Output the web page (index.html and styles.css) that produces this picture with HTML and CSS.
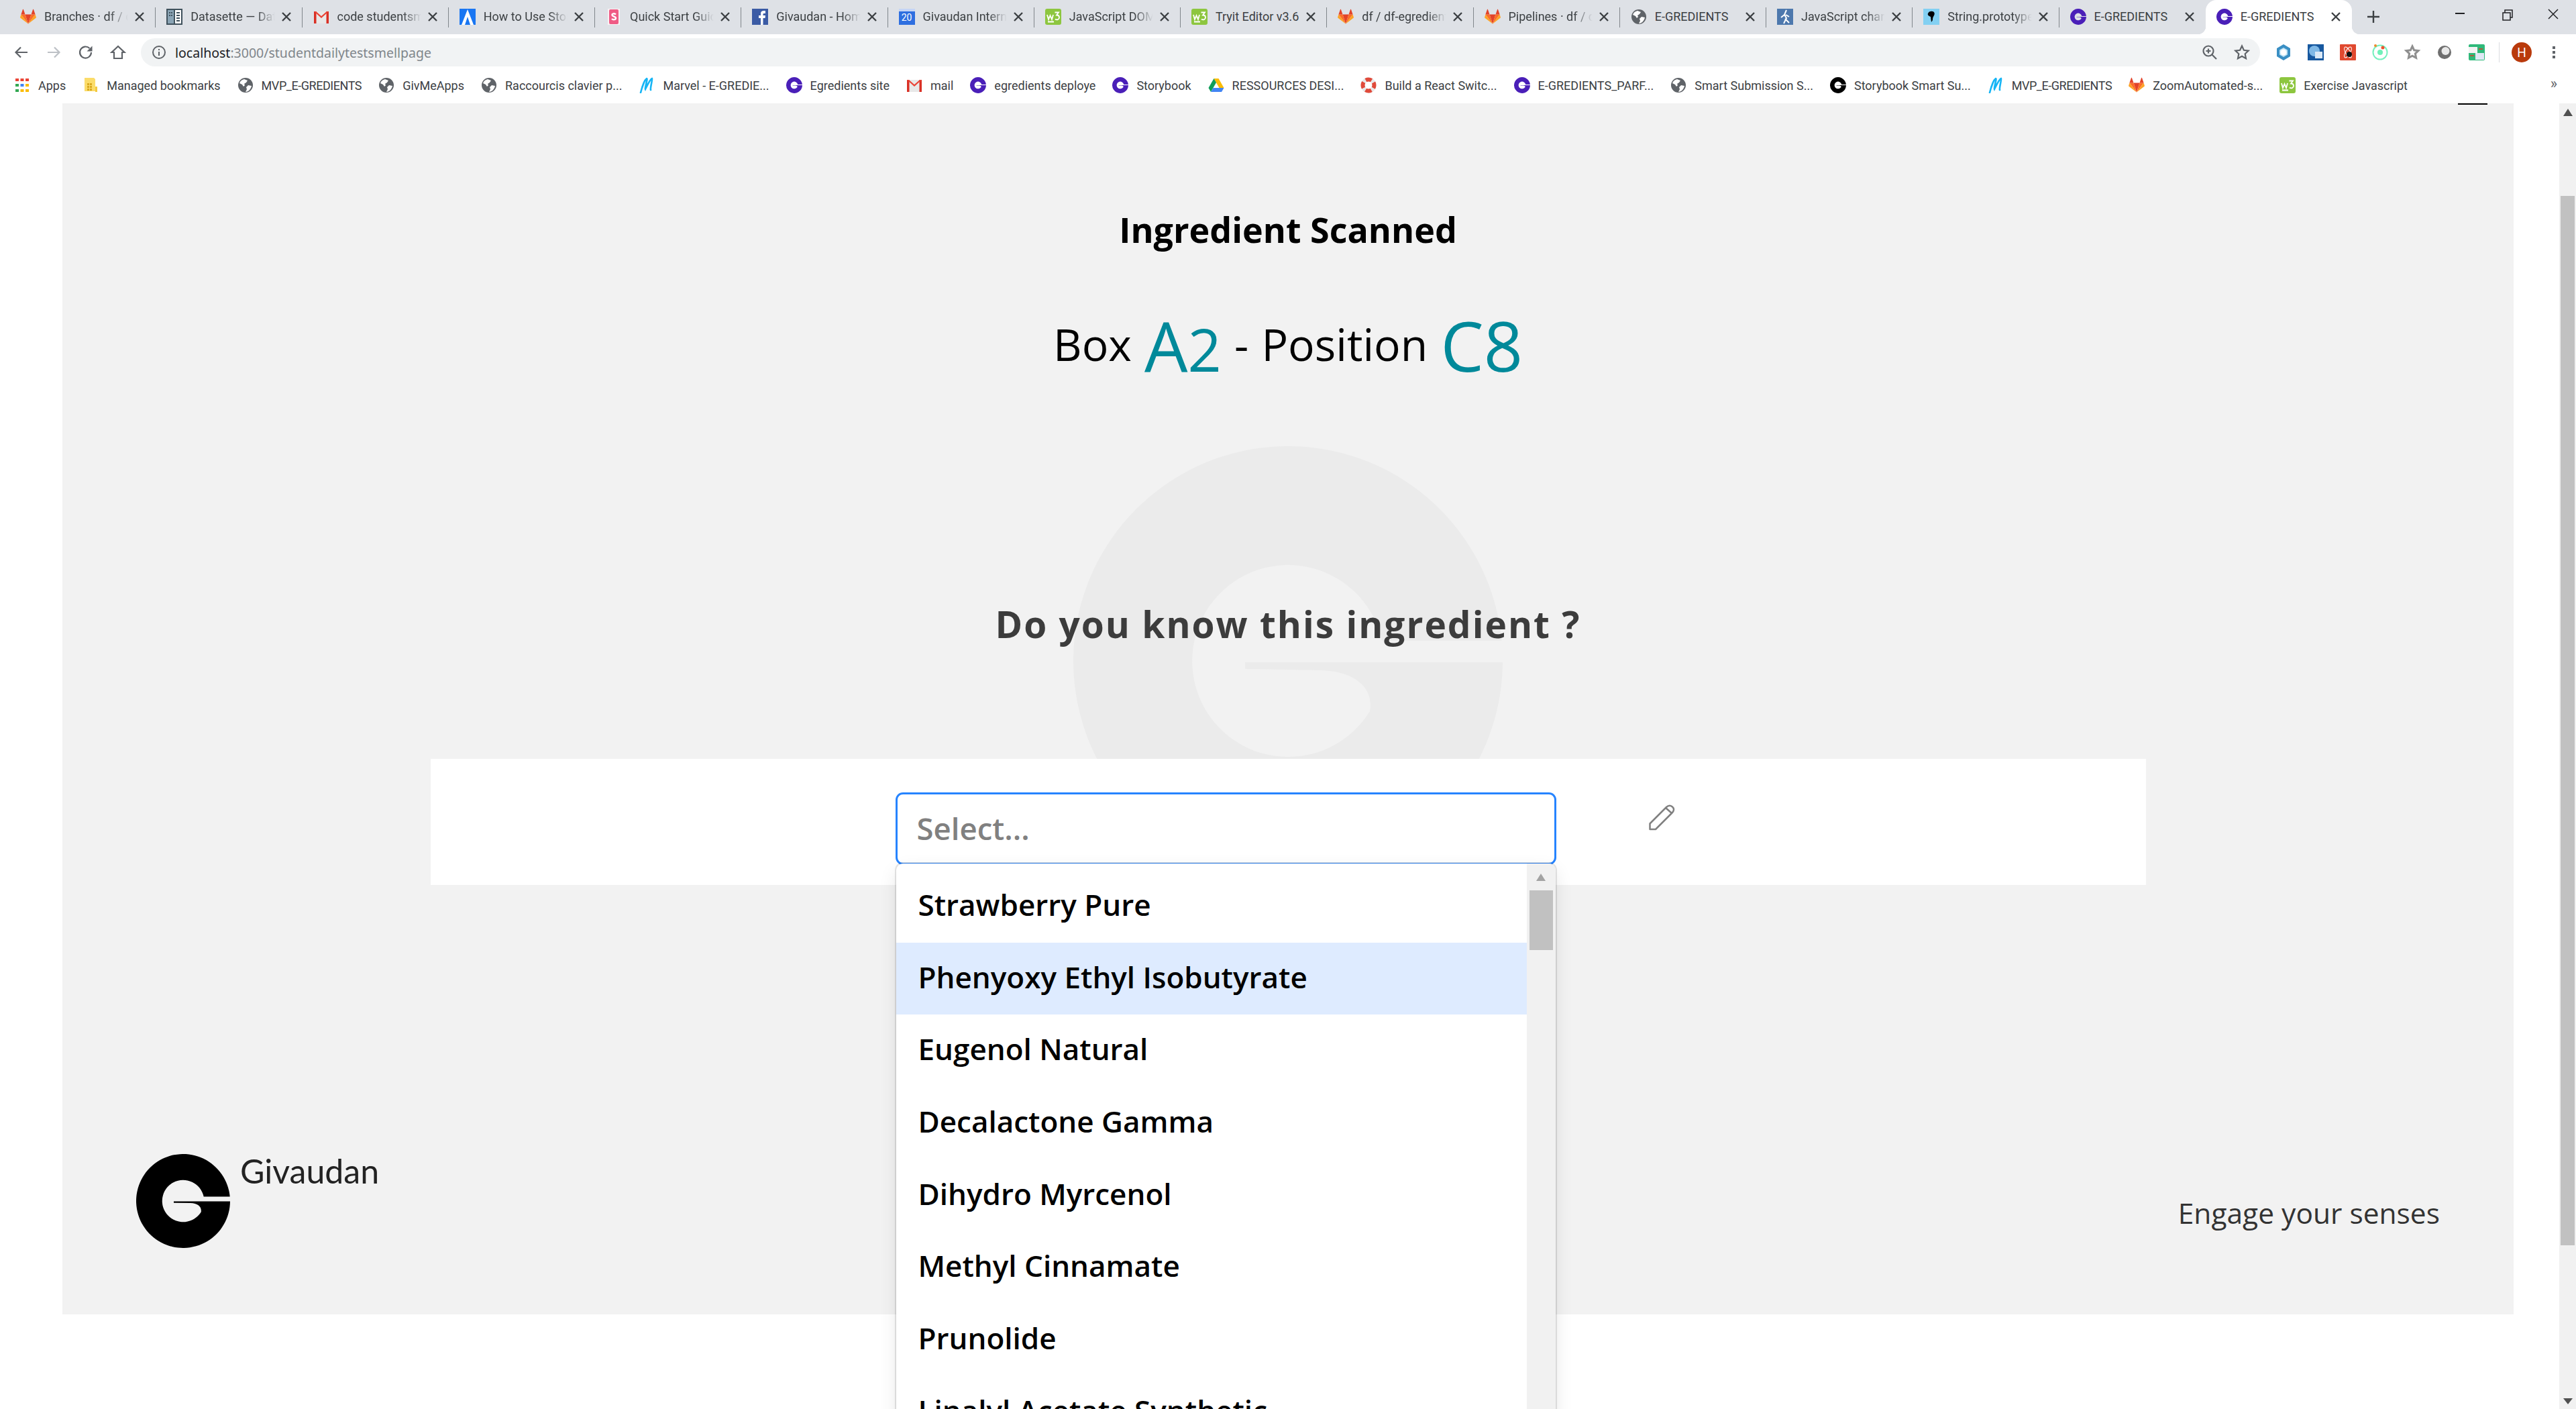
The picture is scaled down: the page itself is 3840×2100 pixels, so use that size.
FILE: index.html
```html
<!DOCTYPE html>
<html lang="en">
<head>
<meta charset="utf-8">
<title>E-GREDIENTS</title>
<link rel="stylesheet" href="styles.css">
</head>
<body>
<svg class="defs" width="0" height="0" aria-hidden="true">
  <defs>
    <symbol id="g-mark" viewBox="0 0 640 640"><path d="M638.6 290A320 320 0 1 0 640 322L256 322 256 332 370 334C420 336 448 360 442 395A143 143 0 1 1 460 290Z"/></symbol>
    <symbol id="ic-gitlab" viewBox="0 0 24 24">
      <path fill="#e24329" d="M12 22.5 16.5 8.6h-9z"/><path fill="#fc6d26" d="M12 22.5 7.5 8.6H1.4zM12 22.5l4.5-13.9h6.1z"/>
      <path fill="#fca326" d="M1.4 8.6.1 12.7c-.1.4 0 .8.4 1L12 22.5zM22.6 8.6l1.3 4.1c.1.4 0 .8-.4 1L12 22.5z"/>
      <path fill="#e24329" d="M1.4 8.6h6.1L4.9 1c-.2-.4-.7-.4-.9 0zM22.6 8.6h-6.1L19.100 1c.2-.4.7-.4.9 0z"/>
    </symbol>
    <symbol id="ic-data" viewBox="0 0 24 24"><rect width="24" height="24" fill="#3f515c"/><rect x="2" y="2" width="9" height="20" fill="#8aa4b5"/><rect x="13" y="2" width="9" height="20" fill="#fff"/><path fill="#3f515c" d="M4 5h2v2H4zM7 5h2v2H7zM4 9h2v2H4zM7 9h2v2H7zM15 5h5v2h-5zM15 9h5v2h-5zM15 13h5v2h-5zM15 17h5v2h-5z"/></symbol>
    <symbol id="ic-gmail" viewBox="0 0 24 24"><path fill="#e8e8e8" d="M1 4h22v18H1z"/><path fill="#d93025" d="M1 4h3.500v18H1zM19.500 4H23v18h-3.500z"/><path fill="#ea4335" d="M1 4h3l8 7 8-7h3l-11 10z"/></symbol>
    <symbol id="ic-ant" viewBox="0 0 24 24"><rect width="24" height="24" fill="#1976f2"/><path fill="#fff" d="M12 1 21 24h-5L12 12 8 24H3z"/></symbol>
    <symbol id="ic-sketch" viewBox="0 0 24 24"><rect x="3" width="18" height="24" fill="#f8f2f4"/><rect x="5" y="1" width="14" height="22" rx="2" fill="#ef5b85"/><path fill="none" stroke="#fff" stroke-width="2.400" d="M15 8.500c-2-2-6-1.500-5.500 1s5.500 2 5.500 4.500-4 3-6 1"/></symbol>
    <symbol id="ic-fb" viewBox="0 0 24 24"><rect width="24" height="24" fill="#3b5ba5"/><path fill="#fff" d="M13 24V14h-3v-4h3V7c0-3 2-4 4.500-4H20v4h-2c-1 0-1.500.5-1.500 1.500V10H20l-.5 4h-3v10z"/></symbol>
    <symbol id="ic-globe" viewBox="0 0 24 24"><circle cx="12" cy="12" r="11" fill="#5f6368"/><path fill="#fff" d="M10 3c-4 1-6 3-7 6l4 2 2 3 2-2-1-2 3-2 2-3zM21 13l-5-1-3 3 1 3-2 4c4 0 8-4 9-9z"/></symbol>
    <symbol id="ic-w3" viewBox="0 0 24 24"><rect width="24" height="24" rx="3" fill="#8dc63f"/><path fill="none" stroke="#fff" stroke-width="1.800" d="M3 9l2 7 2.500-6 2.500 6 2-7M14.500 5.500H20l-3 4c3 0 4 1.500 4 3.500 0 3-3.500 4.500-6 2.500M4 19.500h9"/></symbol>
    <symbol id="ic-drive" viewBox="0 0 24 24"><path fill="#fbbc04" d="M8.500 2h7l8 14h-7z"/><path fill="#0f9d58" d="M8.500 2 .5 16l3.500 6 8-14z"/><path fill="#4285f4" d="M4 22h16l3.500-6H7.500z"/></symbol>
    <symbol id="ic-buoy" viewBox="0 0 24 24"><circle cx="12" cy="12" r="8.500" fill="none" stroke="#e8e8e8" stroke-width="6"/><circle cx="12" cy="12" r="8.500" fill="none" stroke="#e04a3a" stroke-width="6" stroke-dasharray="9 4.350" stroke-dashoffset="4.500"/></symbol>
    <symbol id="ic-marvel" viewBox="0 0 24 24"><path fill="none" stroke="#16b5f5" stroke-width="2.600" stroke-linecap="round" d="M3 23C5 15 9 4 12 2c2 0-3 14-2 16 2-4 7-15 10-16 1 1-3 14-2 17"/></symbol>
    <symbol id="ic-bldg" viewBox="0 0 24 24"><path fill="#fbdc6a" d="M3 1h14l2 2v18H3z"/><rect x="19" y="14" width="3" height="8" fill="#f3c93f"/><path fill="#d9a91f" d="M7 9h3v3H7zM11 9h3v3h-3zM7 13h3v3H7zM11 13h3v3h-3zM7 17h3v3H7zM11 17h3v3h-3z"/></symbol>
    <symbol id="ic-apps" viewBox="0 0 24 24"><path fill="#ea4335" d="M2 2h5v4H2zM9.500 2h5v4h-5zM17 2h5v4h-5z"/><path fill="#34a853" d="M2 10h5v4H2z"/><path fill="#4285f4" d="M9.500 10h5v4h-5z"/><path fill="#fbbc04" d="M17 10h5v4h-5z"/><path fill="#34a853" d="M2 18h5v4H2z"/><path fill="#fbbc04" d="M9.500 18h5v4h-5zM17 18h5v4h-5z"/></symbol>
    <symbol id="ic-x" viewBox="0 0 24 24"><path fill="none" stroke="#3c4043" stroke-width="2.400" d="M6 6l12 12M18 6 6 18"/></symbol>
  </defs>
</svg>

<div class="window">
  <header class="tabbar">
    <div class="tab"><svg class="fav"><use href="#ic-gitlab"/></svg><span class="tab-title">Branches · df / df-egredients</span><svg class="tab-close"><use href="#ic-x"/></svg></div>
    <div class="tab"><svg class="fav"><use href="#ic-data"/></svg><span class="tab-title">Datasette — Datasette</span><svg class="tab-close"><use href="#ic-x"/></svg></div>
    <div class="tab"><svg class="fav"><use href="#ic-gmail"/></svg><span class="tab-title">code studentsmell</span><svg class="tab-close"><use href="#ic-x"/></svg></div>
    <div class="tab"><svg class="fav"><use href="#ic-ant"/></svg><span class="tab-title">How to Use Storybook</span><svg class="tab-close"><use href="#ic-x"/></svg></div>
    <div class="tab"><svg class="fav"><use href="#ic-sketch"/></svg><span class="tab-title">Quick Start Guide</span><svg class="tab-close"><use href="#ic-x"/></svg></div>
    <div class="tab"><svg class="fav"><use href="#ic-fb"/></svg><span class="tab-title">Givaudan - Home</span><svg class="tab-close"><use href="#ic-x"/></svg></div>
    <div class="tab"><span class="fav fav-cal">20</span><span class="tab-title">Givaudan International</span><svg class="tab-close"><use href="#ic-x"/></svg></div>
    <div class="tab"><svg class="fav"><use href="#ic-w3"/></svg><span class="tab-title">JavaScript DOM Events</span><svg class="tab-close"><use href="#ic-x"/></svg></div>
    <div class="tab"><svg class="fav"><use href="#ic-w3"/></svg><span class="tab-title tab-title-full">Tryit Editor v3.6</span><svg class="tab-close"><use href="#ic-x"/></svg></div>
    <div class="tab"><svg class="fav"><use href="#ic-gitlab"/></svg><span class="tab-title">df / df-egredients</span><svg class="tab-close"><use href="#ic-x"/></svg></div>
    <div class="tab"><svg class="fav"><use href="#ic-gitlab"/></svg><span class="tab-title">Pipelines · df / df-egredients</span><svg class="tab-close"><use href="#ic-x"/></svg></div>
    <div class="tab"><svg class="fav"><use href="#ic-globe"/></svg><span class="tab-title tab-title-full">E-GREDIENTS</span><svg class="tab-close"><use href="#ic-x"/></svg></div>
    <div class="tab"><svg class="fav" viewBox="0 0 24 24"><rect width="24" height="24" fill="#4d78ad"/><path fill="none" stroke="#fff" stroke-width="2" d="M14 2l-3 7 3 5-4 8M11 9l-5 4M13 9l5 3M12 15l6 6"/></svg><span class="tab-title">JavaScript charAt</span><svg class="tab-close"><use href="#ic-x"/></svg></div>
    <div class="tab"><svg class="fav" viewBox="0 0 24 24"><rect width="24" height="24" fill="#83d0f2"/><path d="M11 4c5-1 7 3 5 6-1 2-2 3-2 7l-2 3-1-8C8 11 6 9 7 7c1-2 2-3 4-3z"/></svg><span class="tab-title">String.prototype</span><svg class="tab-close"><use href="#ic-x"/></svg></div>
    <div class="tab tab-last"><svg class="fav fav-brand"><use href="#g-mark"/></svg><span class="tab-title tab-title-full">E-GREDIENTS</span><svg class="tab-close"><use href="#ic-x"/></svg></div>
    <div class="tab tab-active"><svg class="fav fav-brand"><use href="#g-mark"/></svg><span class="tab-title tab-title-full">E-GREDIENTS</span><svg class="tab-close"><use href="#ic-x"/></svg></div>
    <svg class="new-tab" viewBox="0 0 24 24"><path fill="none" stroke="#3c4043" stroke-width="2.400" d="M12 3v18M3 12h18"/></svg>
    <div class="win-controls">
      <svg class="win-btn" viewBox="0 0 69 40"><path stroke="#202124" stroke-width="2" d="M27 20h14"/></svg>
      <svg class="win-btn" viewBox="0 0 69 40"><path fill="none" stroke="#202124" stroke-width="1.500" d="M29 19h11v11H29zM32 19v-4h11v11h-3"/></svg>
      <svg class="win-btn" viewBox="0 0 69 40"><path fill="none" stroke="#202124" stroke-width="1.500" d="M28 14l14 14M42 14 28 28"/></svg>
    </div>
  </header>

  <nav class="toolbar">
    <svg class="tool" viewBox="0 0 24 24"><path class="tool-line" d="M21 12H4M11 4.500 3.500 12l7.500 7.500"/></svg>
    <svg class="tool tool-off" viewBox="0 0 24 24"><path class="tool-line" d="M3 12h17M13 4.500l7.500 7.500-7.500 7.500"/></svg>
    <svg class="tool" viewBox="0 0 24 24"><path class="tool-line" d="M20 12a8.500 8.500 0 1 1-2.500-6"/><path fill="#5f6368" d="M21.500 2.500v8h-8z"/></svg>
    <svg class="tool" viewBox="0 0 24 24"><path class="tool-line" d="M12 3 2.500 12H6v9h12v-9h3.500zM6 21h12"/></svg>
    <div class="omnibox">
      <svg class="omni-info" viewBox="0 0 20 20"><circle cx="10" cy="10" r="9" fill="none" stroke="#5f6368" stroke-width="2"/><path fill="#5f6368" d="M9 9h2v6H9zM9 5h2v2H9z"/></svg>
      <span class="url"><span class="url-host">localhost</span>:3000/studentdailytestsmellpage</span>
      <svg class="tool tool-push" viewBox="0 0 24 24"><circle cx="10" cy="10" r="7.500" class="tool-line"/><path class="tool-line" d="M15.500 15.500 22 22M10 6.500v7M6.500 10h7"/></svg>
      <svg class="tool" viewBox="0 0 24 24"><path class="tool-line" d="M12 2.500l2.900 6.300 6.800.8-5 4.700 1.300 6.800-6-3.400-6 3.400 1.300-6.800-5-4.700 6.800-.8z"/></svg>
    </div>
    <div class="extensions">
      <svg class="tool" viewBox="0 0 24 24"><path fill="#3a8fc4" d="M12 0l10 6v12l-10 6-10-6V6z"/><path fill="#bfe3f5" d="M12 5l6 3.500v7L12 19l-6-3.500v-7z"/><circle cx="12" cy="12" r="4.500" fill="#fff"/></svg>
      <svg class="tool" viewBox="0 0 24 24"><rect width="24" height="24" fill="#17589f"/><circle cx="10" cy="10" r="8" fill="#7fb8e6"/><rect x="11" y="11" width="11" height="10" fill="#dbe9f6"/></svg>
      <svg class="tool" viewBox="0 0 24 24"><rect width="24" height="24" rx="1" fill="#e0492f"/><ellipse cx="12" cy="12" rx="9" ry="3.500" fill="none" stroke="#fff" transform="rotate(60 12 12)"/><ellipse cx="12" cy="12" rx="9" ry="3.500" fill="none" stroke="#fff" transform="rotate(-60 12 12)"/><circle cx="14" cy="15" r="4" fill="#111"/></svg>
      <svg class="tool" viewBox="0 0 24 24"><circle cx="12" cy="12" r="10.500" fill="none" stroke="#76f0be" stroke-width="2"/><circle cx="12" cy="12" r="4" fill="#6ff0b8"/><circle cx="16" cy="5" r="2.500" fill="#f0512d"/><circle cx="5" cy="2" r="2" fill="#f08a2d"/></svg>
      <svg class="tool" viewBox="0 0 24 24"><path fill="none" stroke="#8f8f8f" stroke-width="3" d="M12 3l2.700 5.800 6.300.8-4.600 4.300 1.200 6.300-5.600-3.100-5.600 3.100 1.200-6.300L3 9.600l6.300-.8z"/></svg>
      <svg class="tool" viewBox="0 0 24 24"><circle cx="12" cy="12" r="10" fill="#6e6e6e"/><circle cx="13.500" cy="10" r="6" fill="#e8e8e8"/></svg>
      <svg class="tool" viewBox="0 0 24 24"><rect width="24" height="24" rx="2" fill="#2fb97a"/><rect x="0" y="4" width="13" height="9" fill="#f3f3f3"/><rect x="10" y="13" width="13" height="10" fill="#dfe8f5"/><path stroke="#e0392b" stroke-width="1.500" d="M15 7h6M2 17h6"/></svg>
    </div>
    <span class="tool-sep"></span>
    <span class="avatar">H</span>
    <svg class="tool tool-dots" viewBox="0 0 24 24"><path fill="#5f6368" d="M10 3h4v4h-4zM10 10h4v4h-4zM10 17h4v4h-4z"/></svg>
  </nav>

  <nav class="bookmarks">
    <a class="mark"><svg class="mark-ic"><use href="#ic-apps"/></svg>Apps</a>
    <a class="mark"><svg class="mark-ic"><use href="#ic-bldg"/></svg>Managed bookmarks</a>
    <a class="mark mark-tight"><svg class="mark-ic"><use href="#ic-globe"/></svg>MVP_E-GREDIENTS</a>
    <a class="mark"><svg class="mark-ic"><use href="#ic-globe"/></svg>GivMeApps</a>
    <a class="mark"><svg class="mark-ic"><use href="#ic-globe"/></svg>Raccourcis clavier p...</a>
    <a class="mark"><svg class="mark-ic"><use href="#ic-marvel"/></svg>Marvel - E-GREDIE...</a>
    <a class="mark"><svg class="mark-ic fav-brand"><use href="#g-mark"/></svg>Egredients site</a>
    <a class="mark"><svg class="mark-ic"><use href="#ic-gmail"/></svg>mail</a>
    <a class="mark"><svg class="mark-ic fav-brand"><use href="#g-mark"/></svg>egredients deploye</a>
    <a class="mark"><svg class="mark-ic fav-brand"><use href="#g-mark"/></svg>Storybook</a>
    <a class="mark"><svg class="mark-ic"><use href="#ic-drive"/></svg>RESSOURCES DESI...</a>
    <a class="mark"><svg class="mark-ic"><use href="#ic-buoy"/></svg>Build a React Switc...</a>
    <a class="mark"><svg class="mark-ic fav-brand"><use href="#g-mark"/></svg>E-GREDIENTS_PARF...</a>
    <a class="mark"><svg class="mark-ic"><use href="#ic-globe"/></svg>Smart Submission S...</a>
    <a class="mark"><svg class="mark-ic"><use href="#g-mark"/></svg>Storybook Smart Su...</a>
    <a class="mark mark-tight"><svg class="mark-ic"><use href="#ic-marvel"/></svg>MVP_E-GREDIENTS</a>
    <a class="mark"><svg class="mark-ic"><use href="#ic-gitlab"/></svg>ZoomAutomated-s...</a>
    <a class="mark"><svg class="mark-ic"><use href="#ic-w3"/></svg>Exercise Javascript</a>
    <span class="mark-more">»</span>
  </nav>

  <div class="viewport">
    <main class="page">
      <section class="panel">
        <span class="page-bar"></span>
        <svg class="watermark"><use href="#g-mark"/></svg>
        <h1 class="title">Ingredient Scanned</h1>
        <p class="location">Box <span class="code">A<span class="code-digit">2</span></span> - Position <span class="code">C8</span></p>
        <h2 class="question">Do you know this ingredient ?</h2>
        <div class="answer">
          <div class="select">
            <div class="select-control">Select...</div>
            <div class="select-menu">
              <ul class="options">
                <li class="option">Strawberry Pure</li>
                <li class="option option-focus">Phenyoxy Ethyl Isobutyrate</li>
                <li class="option">Eugenol Natural</li>
                <li class="option">Decalactone Gamma</li>
                <li class="option">Dihydro Myrcenol</li>
                <li class="option">Methyl Cinnamate</li>
                <li class="option">Prunolide</li>
                <li class="option">Linalyl Acetate Synthetic</li>
              </ul>
              <div class="menu-scroll"><span class="arrow-up arrow-menu"></span><span class="menu-thumb"></span></div>
            </div>
          </div>
          <svg class="pencil" viewBox="0 0 40 40"><path fill="none" stroke="#808080" stroke-width="2.500" stroke-linejoin="round" d="M1.500 29.500 26 5c3-3 6-3 9-.5s2.500 6-.5 9L10 38H1.500zM25 6l9 8"/></svg>
        </div>
        <footer class="brand-row">
          <div class="brand">
            <svg class="brand-mark"><use href="#g-mark"/></svg>
            <span class="brand-name">Givaudan</span>
          </div>
          <span class="tagline">Engage your senses</span>
        </footer>
      </section>
    </main>
    <aside class="page-scroll"><span class="arrow-up"></span><span class="page-thumb"></span><span class="arrow-down"></span></aside>
  </div>
</div>
</body>
</html>
```
FILE: styles.css
```css
* { box-sizing: border-box; }
html, body { margin: 0; height: 2100px; overflow: hidden; background: #fff; }
body { font-family: "Open Sans", "Noto Sans", sans-serif; }
.defs { position: absolute; }

.window { height: 2100px; display: flex; flex-direction: column; }

/* tab strip */
.tabbar { height: 51px; flex: none; display: flex; align-items: stretch; background: #dee1e6; padding-left: 14px; font-family: Roboto, sans-serif; font-size: 18px; line-height: 24px; color: #3c4043; }
.tab { position: relative; width: 218.260px; flex: none; display: flex; align-items: center; padding: 0 12px 2px 16px; }
.tab::after { content: ""; position: absolute; right: 0; top: 11px; height: 30px; width: 1px; background: #80868b; }
.tab-last::after { display: none; }
.tab-active { background: #fff; border-radius: 16px 16px 0 0; }
.tab-active::before { content: ""; position: absolute; left: -12px; bottom: 0; width: 12px; height: 12px; background: radial-gradient(circle at 0 0, #dee1e6 12px, #fff 12.500px); }
.tab-active::after { right: -12px; top: auto; bottom: 0; width: 12px; height: 12px; background: radial-gradient(circle at 100% 0, #dee1e6 12px, #fff 12.500px); }
.fav { width: 24px; height: 24px; flex: none; margin-right: 12px; }
.fav-cal { display: flex; align-items: center; justify-content: center; padding-top: 3px; background: linear-gradient(#c5d5f5 4px, #2e6fe0 4px); color: #fff; font-size: 14px; }
.fav-brand { fill: #4a1fb8; }
.tab-title { flex: 1; min-width: 0; white-space: nowrap; overflow: hidden; -webkit-mask-image: linear-gradient(90deg, #000 75%, transparent 96%); mask-image: linear-gradient(90deg, #000 75%, transparent 96%); }
.tab-title-full { -webkit-mask-image: none; mask-image: none; }
.tab-close { width: 24px; height: 24px; flex: none; }
.new-tab { width: 24px; height: 24px; flex: none; margin: 13px 0 0 20px; }
.win-controls { margin-left: auto; display: flex; align-items: flex-start; }
.win-btn { width: 69px; height: 40px; }

/* toolbar */
.toolbar { height: 54px; flex: none; display: flex; align-items: center; padding: 0 21px 0 8px; background: #fff; }
.tool { width: 48px; height: 24px; flex: none; }
.tool-line { fill: none; stroke: #5f6368; stroke-width: 2.200; }
.tool-off .tool-line { stroke: #bdc1c6; }
.omnibox { flex: 1; height: 42px; margin-left: 10px; padding: 0 3px 0 17px; border-radius: 21px; background: #f1f3f4; display: flex; align-items: center; }
.omni-info { width: 20px; height: 20px; flex: none; margin-right: 14px; }
.url { font-family: "Noto Sans", sans-serif; font-size: 19.500px; color: #80868b; white-space: nowrap; }
.url-host { color: #202124; }
.tool-push { margin-left: auto; }
.extensions { display: flex; margin-left: 11px; }
.tool-sep { width: 1px; height: 30px; margin-left: 9px; background: #dadce0; }
.avatar { width: 30px; height: 30px; margin-left: 18px; border-radius: 50%; background: #b93a0c; color: #fff; font: 19px/30px "Noto Sans", sans-serif; text-align: center; }
.tool-dots { width: 24px; margin-left: 21px; }

/* bookmarks */
.bookmarks { height: 49px; flex: none; display: flex; align-items: center; gap: 25px; padding: 0 0 5px 21px; position: relative; background: #fff; font-family: Roboto, sans-serif; font-size: 18px; color: #3c4043; }
.mark { display: flex; align-items: center; gap: 12px; white-space: nowrap; }
.mark-tight { letter-spacing: -.45px; }
.mark-ic { width: 24px; height: 24px; flex: none; }
.mark-more { position: absolute; right: 28px; top: 7px; font-size: 22px; color: #5f6368; }

/* page */
.viewport { flex: 1; min-height: 0; display: flex; }
.page { flex: 1; min-width: 0; padding-left: 93px; }
.panel { position: relative; width: 3654px; height: 1805px; background: #f2f2f2; display: flex; flex-direction: column; align-items: center; color: #000; }
.page-bar { position: absolute; top: 0; right: 39px; width: 44px; height: 2px; background: #000; }
.watermark { position: absolute; left: 1507px; top: 511px; width: 640px; height: 640px; fill: #ebebeb; }
.title { position: relative; margin: 154px 0 0; font-size: 52px; line-height: 68px; font-weight: 700; }
.location { position: relative; margin: 94px 0 0; font-size: 66px; line-height: 84px; white-space: nowrap; word-spacing: 2px; }
.code { font-size: 102px; line-height: 84px; color: #00899a; vertical-align: -16px; }
.code-digit { font-size: 88px; }
.question { position: relative; margin: 0; margin-top: 330px; font-size: 55px; line-height: 76px; font-weight: 700; color: #3c3c3c; letter-spacing: 2px; }
.answer { position: relative; margin-top: 163px; width: 2557px; height: 188px; flex: none; background: #fff; display: flex; align-items: flex-start; padding: 51px 0 0 694px; }
.select { position: relative; width: 983px; flex: none; }
.select-control { height: 106px; border: 2px solid #2684ff; border-radius: 10px; box-shadow: 0 0 0 1px #2684ff; background: #fff; padding-left: 29px; font-size: 45.500px; line-height: 100px; font-weight: 600; color: #808080; }
.select-menu { position: absolute; left: 0; right: 0; top: 105px; height: 1000px; display: flex; background: #fff; border-radius: 10px 10px 0 0; box-shadow: 0 0 0 2px rgba(0,0,0,.1), 0 10px 27px rgba(0,0,0,.1); overflow: hidden; }
.options { flex: 1; margin: 0; padding: 10px 0 0; list-style: none; font-size: 44px; font-weight: 600; color: #000; }
.option { height: 107.700px; padding-left: 33px; line-height: 103px; white-space: nowrap; }
.option-focus { background: #deebff; }
.menu-scroll { width: 43px; flex: none; background: #f1f1f1; display: flex; flex-direction: column; align-items: center; padding-top: 15px; }
.menu-thumb { width: 35px; height: 89px; margin-top: 14px; background: #c1c1c1; }
.arrow-up { width: 0; height: 0; border: 7px solid transparent; border-top: 0; border-bottom: 11px solid #a3a3a3; }
.pencil { width: 40px; height: 40px; margin: 16px 0 0 139px; flex: none; }
.brand-row { position: relative; flex: 1; align-self: stretch; display: flex; justify-content: space-between; align-items: flex-start; padding: 401px 110px 0 110px; }
.brand { display: flex; align-items: flex-start; gap: 15px; }
.brand-mark { width: 140px; height: 140px; flex: none; fill: #000; }
.brand-name { font-family: "Lato", sans-serif; font-size: 50px; line-height: 58px; margin-top: -4px; color: #222; }
.tagline { font-size: 42.500px; line-height: 60px; margin-top: 58px; color: #333; }
.page-scroll { width: 25px; flex: none; position: relative; background: #f1f1f1; display: flex; flex-direction: column; align-items: center; padding-top: 8px; }
.page-scroll .arrow-up { border-bottom-color: #505050; }
.page-thumb { width: 21px; height: 1564px; margin-top: 119px; background: #c1c1c1; }
.arrow-down { position: absolute; bottom: 7px; width: 0; height: 0; border: 7px solid transparent; border-bottom: 0; border-top: 9px solid #505050; }
```
